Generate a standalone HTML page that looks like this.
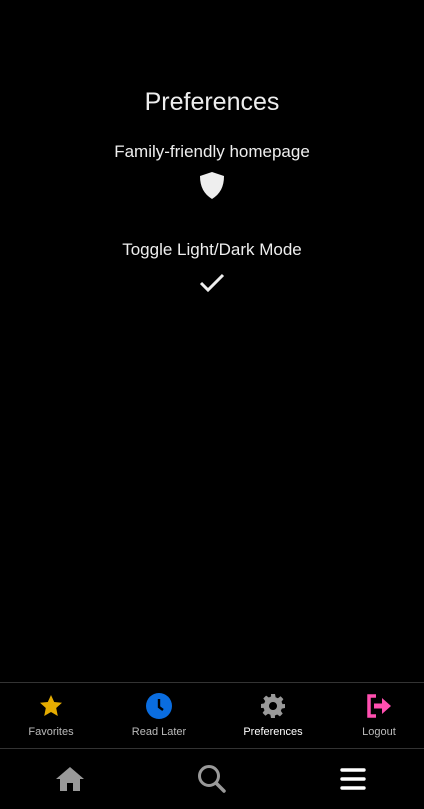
<!DOCTYPE html>
<html><head><style>
body{margin:0;width:424px;height:809px;background:#000;font-family:"Liberation Sans",sans-serif;color:#fff;position:relative;overflow:hidden}
.t{position:absolute;left:0;width:424px;text-align:center}
.ic{position:absolute}
.lab{position:absolute;top:726px;font-size:11px;width:100px;text-align:center;color:#bbb}
</style></head><body>
<div class="t" style="top:88px;font-size:25px;color:#eee">Preferences</div>
<div class="t" style="top:142px;font-size:17px;color:#eee">Family-friendly homepage</div>
<svg class="ic" style="left:199px;top:171px" width="26" height="28" viewBox="0 0 26 28"><path d="M13 1 L25 5 C25 16 21 23 13 28 C5 23 1 16 1 5 Z" fill="#eee"/></svg>
<div class="t" style="top:240px;font-size:17px;color:#eee">Toggle Light/Dark Mode</div>
<svg class="ic" style="left:199px;top:273px" width="26" height="20" viewBox="0 0 26 20"><path d="M2 10 L9 17 L24 2" stroke="#eee" stroke-width="3" fill="none"/></svg>
<div style="position:absolute;left:0;top:682px;width:424px;height:1px;background:#333"></div>
<div style="position:absolute;left:0;top:748px;width:424px;height:1px;background:#333"></div>
<svg class="ic" style="left:39px;top:694px" width="24" height="24" viewBox="0 0 24 24"><path d="M12 1 L15.2 8 L23 8.8 L17.2 14 L18.8 22 L12 18 L5.2 22 L6.8 14 L1 8.8 L8.8 8 Z" fill="#e5ac00"/></svg>
<div class="lab" style="left:1px">Favorites</div>
<svg class="ic" style="left:146px;top:693px" width="26" height="26" viewBox="0 0 26 26"><circle cx="13" cy="13" r="13" fill="#0a6de0"/><path d="M13 6 V14 L17 17" stroke="#000" stroke-width="2.4" fill="none"/></svg>
<div class="lab" style="left:109px">Read Later</div>
<svg class="ic" style="left:261px;top:694px" width="24" height="24" viewBox="0 0 24 24"><path fill="#999" fill-rule="evenodd" d="M10 0h4l.6 3.2 2.3 1 2.7-1.9 2.8 2.8-1.9 2.7 1 2.3L24 10v4l-3.2.6-1 2.3 1.9 2.7-2.8 2.8-2.7-1.9-2.3 1L14 24h-4l-.6-3.2-2.3-1-2.7 1.9-2.8-2.8 1.9-2.7-1-2.3L0 14v-4l3.2-.6 1-2.3-1.9-2.7 2.8-2.8 2.7 1.9 2.3-1zM12 8a4 4 0 1 0 .01 0z"/></svg>
<div class="lab" style="left:223px;color:#fff">Preferences</div>
<svg class="ic" style="left:366px;top:694px" width="26" height="24" viewBox="0 0 26 24"><path d="M10 2 H3 V22 H10" stroke="#ff4fb0" stroke-width="3.5" fill="none"/><path d="M8 9.5 H16 V4 L25 12 L16 20 V14.5 H8 Z" fill="#ff4fb0"/></svg>
<div class="lab" style="left:329px">Logout</div>
<svg class="ic" style="left:56px;top:766px" width="28" height="26" viewBox="0 0 28 26"><path d="M14 1 L28 13 H24 V25 H17 V17 H11 V25 H4 V13 H0 Z" fill="#999"/></svg>
<svg class="ic" style="left:197px;top:764px" width="30" height="30" viewBox="0 0 30 30"><circle cx="12" cy="12" r="9.5" stroke="#999" stroke-width="3" fill="none"/><path d="M19 19 L27 27" stroke="#999" stroke-width="3.5" stroke-linecap="round"/></svg>
<svg class="ic" style="left:340px;top:767px" width="26" height="24" viewBox="0 0 26 24"><path d="M2 3H24M2 12H24M2 21H24" stroke="#fff" stroke-width="3.4" stroke-linecap="round"/></svg>
</body></html>
